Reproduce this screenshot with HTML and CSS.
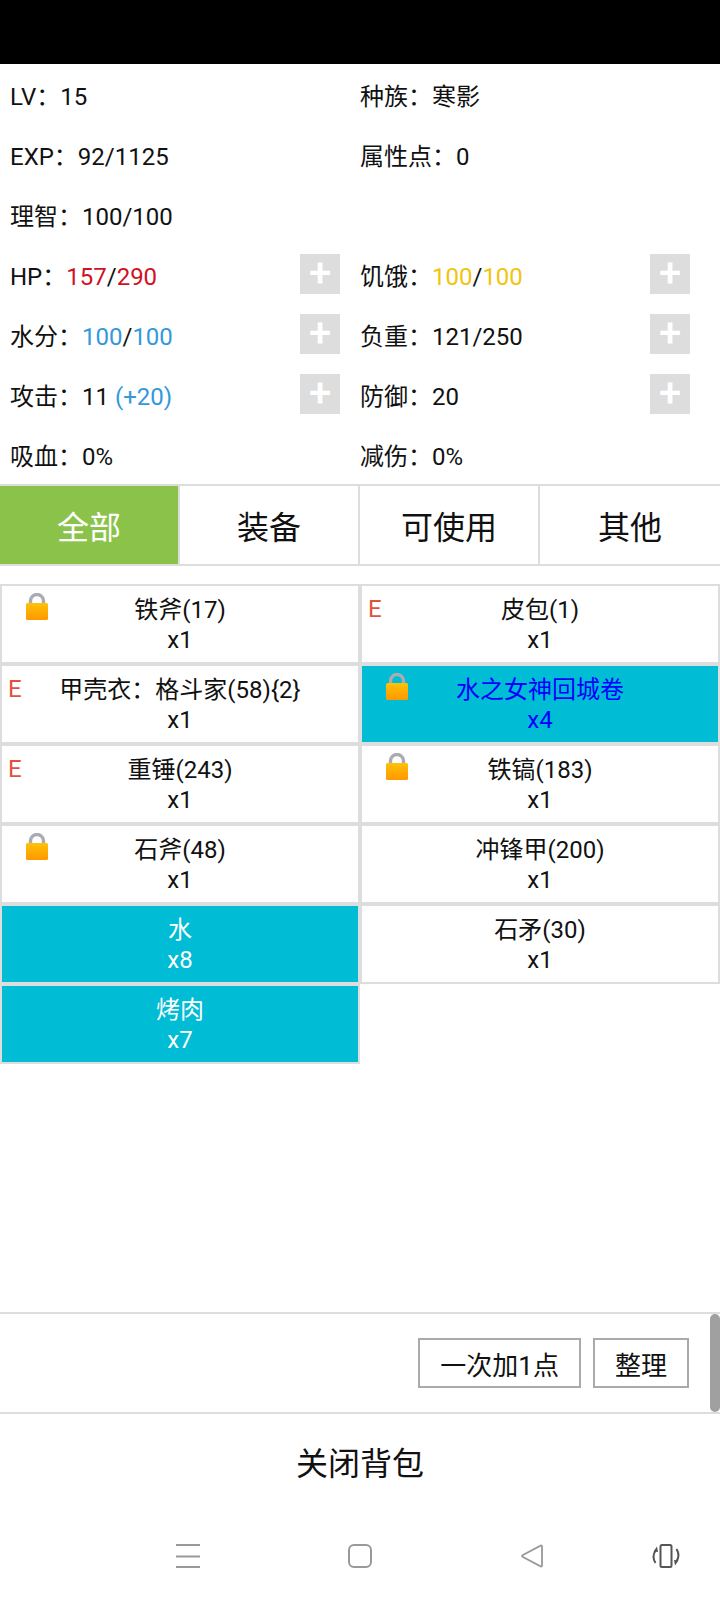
FILE: index.html
```html
<!DOCTYPE html>
<html lang="zh-CN">
<head>
    <meta charset="UTF-8">
    <meta name="viewport" content="width=device-width, initial-scale=1.0">
    <title>背包</title>
    <link rel="stylesheet" href="styles.css">
</head>
<body>
    <svg class="defs" width="0" height="0">
        <defs>
            <linearGradient id="lock-body" x1="0" y1="0" x2="0" y2="1">
                <stop offset="0" stop-color="#ffc107"/>
                <stop offset="1" stop-color="#ff9800"/>
            </linearGradient>
            <symbol id="lock" viewBox="0 0 22 27">
                <path d="M4.5 11V8a6.5 6.5 0 0 1 13 0v3" fill="none" stroke="#a9adb2" stroke-width="3.4"/>
                <rect x="0" y="10" width="22" height="17" rx="1.5" fill="url(#lock-body)"/>
            </symbol>
        </defs>
    </svg>

    <div class="status-bar"></div>

    <div class="stats">
        <div class="stat"><span>LV：15</span></div>
        <div class="stat"><span>种族：寒影</span></div>
        <div class="stat"><span>EXP：92/1125</span></div>
        <div class="stat"><span>属性点：0</span></div>
        <div class="stat"><span>理智：100/100</span></div>
        <div class="stat"></div>
        <div class="stat"><span>HP：<i class="red">157</i>/<i class="red">290</i></span><button class="plus">+</button></div>
        <div class="stat"><span>饥饿：<i class="yellow">100</i>/<i class="yellow">100</i></span><button class="plus">+</button></div>
        <div class="stat"><span>水分：<i class="blue">100</i>/<i class="blue">100</i></span><button class="plus">+</button></div>
        <div class="stat"><span>负重：121/250</span><button class="plus">+</button></div>
        <div class="stat"><span>攻击：11 <i class="blue">(+20)</i></span><button class="plus">+</button></div>
        <div class="stat"><span>防御：20</span><button class="plus">+</button></div>
        <div class="stat"><span>吸血：0%</span></div>
        <div class="stat"><span>减伤：0%</span></div>
    </div>

    <div class="tabs">
        <div class="tab active">全部</div>
        <div class="tab">装备</div>
        <div class="tab">可使用</div>
        <div class="tab">其他</div>
    </div>

    <div class="items">
        <div class="item"><svg class="lock"><use href="#lock"/></svg>铁斧(17)<br>x1</div>
        <div class="item"><span class="equip">E</span>皮包(1)<br>x1</div>
        <div class="item"><span class="equip">E</span>甲壳衣：格斗家(58){2}<br>x1</div>
        <div class="item usable quest"><svg class="lock"><use href="#lock"/></svg>水之女神回城卷<br>x4</div>
        <div class="item"><span class="equip">E</span>重锤(243)<br>x1</div>
        <div class="item"><svg class="lock"><use href="#lock"/></svg>铁镐(183)<br>x1</div>
        <div class="item"><svg class="lock"><use href="#lock"/></svg>石斧(48)<br>x1</div>
        <div class="item">冲锋甲(200)<br>x1</div>
        <div class="item usable">水<br>x8</div>
        <div class="item">石矛(30)<br>x1</div>
        <div class="item usable">烤肉<br>x7</div>
    </div>

    <div class="toolbar">
        <button class="tool-btn">一次加1点</button>
        <button class="tool-btn">整理</button>
        <div class="scrollbar"></div>
    </div>

    <div class="close">关闭背包</div>

    <div class="nav">
        <svg class="nav-menu" width="24" height="24" viewBox="0 0 24 24">
            <path d="M0 1h24M0 12.5h24M0 23h24" stroke="#999" stroke-width="2" fill="none"/>
        </svg>
        <svg class="nav-home" width="24" height="24" viewBox="0 0 24 24">
            <rect x="1" y="1" width="22" height="22" rx="5" stroke="#999" stroke-width="2" fill="none"/>
        </svg>
        <svg class="nav-back" width="22" height="24" viewBox="0 0 22 24">
            <path d="M20 1.5a1 1 0 0 1 1 1v19a1 1 0 0 1-1 1L1.500 12.800a1 1 0 0 1 0-1.600z" stroke="#999" stroke-width="1.800" fill="none"/>
        </svg>
        <svg class="nav-rotate" width="30" height="24" viewBox="0 0 30 24">
            <rect x="9.500" y="1" width="11" height="22" rx="1.500" stroke="#555" stroke-width="2" fill="none"/>
            <path d="M5 6C2 10 2 15 4.500 19" stroke="#555" stroke-width="2" fill="none"/>
            <path d="M25 18C28 14 28 9 25.500 5" stroke="#555" stroke-width="2" fill="none"/>
            <path d="M2.500 7.500L6 2.500L7 8zM27.500 16.500L24 21.500L23 16z" fill="#555"/>
        </svg>
    </div>
</body>
</html>
```

FILE: styles.css
```css
* {
    margin: 0;
    padding: 0;
    box-sizing: border-box;
}
body {
    display: flex;
    flex-direction: column;
    height: 1600px;
    overflow: hidden;
    background: #fff;
    color: #111;
    font-family: Roboto, "Noto Sans CJK SC", sans-serif;
    font-size: 24px;
}
.defs {
    position: absolute;
}
.status-bar {
    height: 64px;
    background: #000;
}
.stats {
    display: grid;
    grid-template-columns: 360px 360px;
}
.stat {
    display: flex;
    align-items: center;
    justify-content: space-between;
    height: 60px;
    padding-right: 30px;
}
.stat:nth-child(odd) {
    padding-left: 10px;
    padding-right: 20px;
}
.stat i {
    font-style: normal;
}
.red {
    color: #d0121f;
}
.yellow {
    color: #f1c40f;
}
.blue {
    color: #3498db;
}
.plus {
    width: 40px;
    height: 40px;
    border: none;
    background: #ddd;
    color: #fff;
    font-family: Roboto, sans-serif;
    font-size: 40px;
    font-weight: 500;
    line-height: 40px;
}
.tabs {
    display: flex;
    height: 82px;
    border-top: 2px solid #ddd;
    border-bottom: 2px solid #ddd;
}
.tab {
    display: flex;
    align-items: center;
    justify-content: center;
    width: 180px;
    border-right: 2px solid #ddd;
    font-size: 32px;
}
.tab:last-child {
    border-right: none;
}
.tab.active {
    background: #8bc34a;
    color: #fff;
}
.items {
    display: grid;
    grid-template-columns: 360px 360px;
    grid-auto-rows: 80px;
    margin-top: 18px;
}
.item {
    position: relative;
    border: 2px solid #ddd;
    padding-top: 9px;
    line-height: 30px;
    text-align: center;
}
.item.usable {
    background: #00bcd4;
    color: #fff;
}
.item.quest {
    color: #0000ff;
}
.lock {
    position: absolute;
    top: 7px;
    left: 24px;
    width: 22px;
    height: 27px;
}
.equip {
    position: absolute;
    top: 8px;
    left: 6px;
    color: #e0533a;
    line-height: 30px;
}
.toolbar {
    position: relative;
    display: flex;
    align-items: center;
    justify-content: flex-end;
    gap: 12px;
    height: 102px;
    margin-top: auto;
    padding-right: 31px;
    border-top: 2px solid #ddd;
    border-bottom: 2px solid #ddd;
}
.tool-btn {
    height: 50px;
    padding: 0 20px;
    border: 2px solid #aaa;
    background: #fff;
    color: #111;
    font-family: inherit;
    font-size: 26px;
}
.scrollbar {
    position: absolute;
    top: 0;
    right: 0;
    width: 10px;
    height: 98px;
    border-radius: 5px;
    background: #a0a0a0;
}
.close {
    display: flex;
    align-items: center;
    justify-content: center;
    height: 94px;
    font-size: 32px;
}
.nav {
    display: flex;
    height: 92px;
    padding: 36px 0 0 176px;
}
.nav-home {
    margin-left: 148px;
}
.nav-back {
    margin-left: 149px;
}
.nav-rotate {
    margin-left: 108px;
}
```
